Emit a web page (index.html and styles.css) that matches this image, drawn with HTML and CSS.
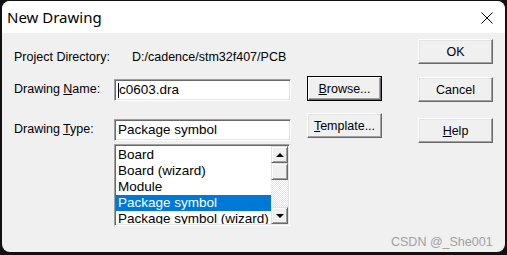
FILE: index.html
```html
<!DOCTYPE html>
<html lang="en">
<head>
    <meta charset="UTF-8">
    <title>New Drawing</title>
    <link rel="stylesheet" href="styles.css">
</head>
<body>
    <div class="window">
        <div class="titlebar">
            <span class="title">New Drawing</span>
            <svg class="close" width="12" height="12" viewBox="0 0 12 12">
                <path d="M0.5 0.5 L11.5 11.5 M11.5 0.5 L0.5 11.5" stroke="#000" stroke-width="1" fill="none"/>
            </svg>
        </div>

        <div class="client">
            <div class="form">
                <div class="label r1">Project Directory:</div>
                <div class="path r1">D:/cadence/stm32f407/PCB</div>

                <div class="label r2">Drawing <u>N</u>ame:</div>
                <div class="field r2"><span class="caret"></span>c0603.dra</div>
                <button class="btn default r2">
                    <span class="btn-face"><u>B</u>rowse...</span>
                </button>

                <div class="label r3">Drawing <u>T</u>ype:</div>
                <div class="field r3">Package symbol</div>
                <button class="btn r3 template"><u>T</u>emplate...</button>

                <div class="listbox r4">
                    <div class="items">
                        <div class="item">Board</div>
                        <div class="item">Board (wizard)</div>
                        <div class="item">Module</div>
                        <div class="item selected">Package symbol</div>
                        <div class="item">Package symbol (wizard)</div>
                    </div>
                    <div class="scrollbar">
                        <div class="sb-btn"><span class="arrow up"></span></div>
                        <div class="sb-btn thumb"></div>
                        <div class="track"></div>
                        <div class="sb-btn"><span class="arrow down"></span></div>
                    </div>
                </div>
            </div>

            <div class="actions">
                <button class="btn ok">OK</button>
                <button class="btn cancel">Cancel</button>
                <button class="btn help"><u>H</u>elp</button>
            </div>
        </div>

        <div class="watermark">CSDN @_She001</div>
    </div>
</body>
</html>
```

FILE: styles.css
```css
html, body {
    margin: 0;
    padding: 0;
}
body {
    background: #111;
    width: 507px;
    height: 255px;
    overflow: hidden;
    font-family: "Liberation Sans", Arial, sans-serif;
    font-size: 12.5px;
    color: #000;
}
.window {
    position: relative;
    margin: 1px 2px 0 2px;
    width: 503px;
    height: 251px;
    background: #f0f0f0;
    border-radius: 8px;
    overflow: hidden;
}
.titlebar {
    height: 32px;
    background: #fff;
    display: flex;
    align-items: center;
    justify-content: space-between;
    padding: 0 12px 0 5px;
}
.title {
    font-family: "Noto Sans", sans-serif;
    font-size: 15px;
    margin-top: -1px;
}
.close {
    display: block;
    margin-top: 1px;
}

.client {
    display: flex;
    padding: 0 0 0 12px;
}
.form {
    display: grid;
    grid-template-columns: 100px 177px 16px 75px;
    grid-template-rows: 20px 34px 40px 85px;
    margin-top: 14px;
}
.form > * {
    align-self: end;
}
.label {
    grid-column: 1;
    height: 24px;
    line-height: 24px;
    white-space: nowrap;
}
.r1 { grid-row: 1; }
.r2 { grid-row: 2; }
.r3 { grid-row: 3; }
.r4 { grid-row: 4; }
.label.r1 {
    height: 20px;
    line-height: 20px;
}
.path {
    grid-column: 2 / 5;
    line-height: 20px;
    margin-left: 18px;
    white-space: nowrap;
}

.field {
    grid-column: 2;
    height: 20px;
    line-height: 20px;
    padding: 0 3px;
    font-size: 13.5px;
    background: #fff;
    border: 1px solid;
    border-color: #a0a0a0 #fff #fff #a0a0a0;
    box-shadow: inset 1px 1px #696969, inset -1px -1px #e3e3e3;
    white-space: nowrap;
    display: flex;
    align-items: center;
}
.caret {
    width: 1px;
    height: 15px;
    background: #000;
}

.btn {
    font-family: "Liberation Sans", Arial, sans-serif;
    font-size: 12.5px;
    color: #000;
    background: #f0f0f0;
    width: 75px;
    height: 25px;
    padding: 0;
    border: 1px solid;
    border-color: #fff #696969 #696969 #fff;
    box-shadow: inset -1px -1px #a0a0a0, inset 1px 1px #e3e3e3;
}
.form .btn {
    grid-column: 4;
}
.btn.default {
    border: 1px solid #000;
    box-shadow: none;
    display: flex;
    padding: 0;
}
.btn-face {
    flex: 1;
    display: flex;
    align-items: center;
    justify-content: center;
    border: 1px solid;
    border-color: #fff #696969 #696969 #fff;
    box-shadow: inset -1px -1px #a0a0a0;
}
.btn.template {
    margin-bottom: 3px;
}

.listbox {
    grid-column: 2;
    height: 78px;
    margin-right: 1px;
    display: flex;
    background: #fff;
    border: 1px solid;
    border-color: #a0a0a0 #fff #fff #a0a0a0;
    box-shadow: inset 1px 1px #696969, inset -1px -1px #e3e3e3;
    padding: 1px;
}
.items {
    flex: 1;
    overflow: hidden;
    padding-top: 1px;
    font-size: 13.5px;
}
.item {
    height: 16px;
    line-height: 16px;
    padding-left: 2px;
    white-space: nowrap;
}
.item.selected {
    background: #0078d7;
    color: #fff;
}
.scrollbar {
    width: 17px;
    display: flex;
    flex-direction: column;
}
.sb-btn {
    height: 15px;
    background: #f0f0f0;
    border: 1px solid;
    border-color: #e3e3e3 #696969 #696969 #e3e3e3;
    box-shadow: inset 1px 1px #fff, inset -1px -1px #a0a0a0;
    display: flex;
    align-items: center;
    justify-content: center;
}
.track {
    flex: 1;
    background: repeating-conic-gradient(#fff 0 25%, #e6e6e6 0 50%) 0 0 / 2px 2px;
}
.arrow {
    width: 0;
    height: 0;
    border-left: 4px solid transparent;
    border-right: 4px solid transparent;
}
.arrow.up {
    border-bottom: 4px solid #000;
}
.arrow.down {
    border-top: 4px solid #000;
}

.actions {
    display: flex;
    flex-direction: column;
    margin-left: 36px;
    padding-top: 6px;
}
.actions .cancel {
    margin-top: 13px;
}
.actions .help {
    margin-top: 16px;
}

.watermark {
    position: absolute;
    left: 389px;
    top: 234px;
    font-size: 12.5px;
    color: #a0a0a0;
    white-space: nowrap;
}
```
